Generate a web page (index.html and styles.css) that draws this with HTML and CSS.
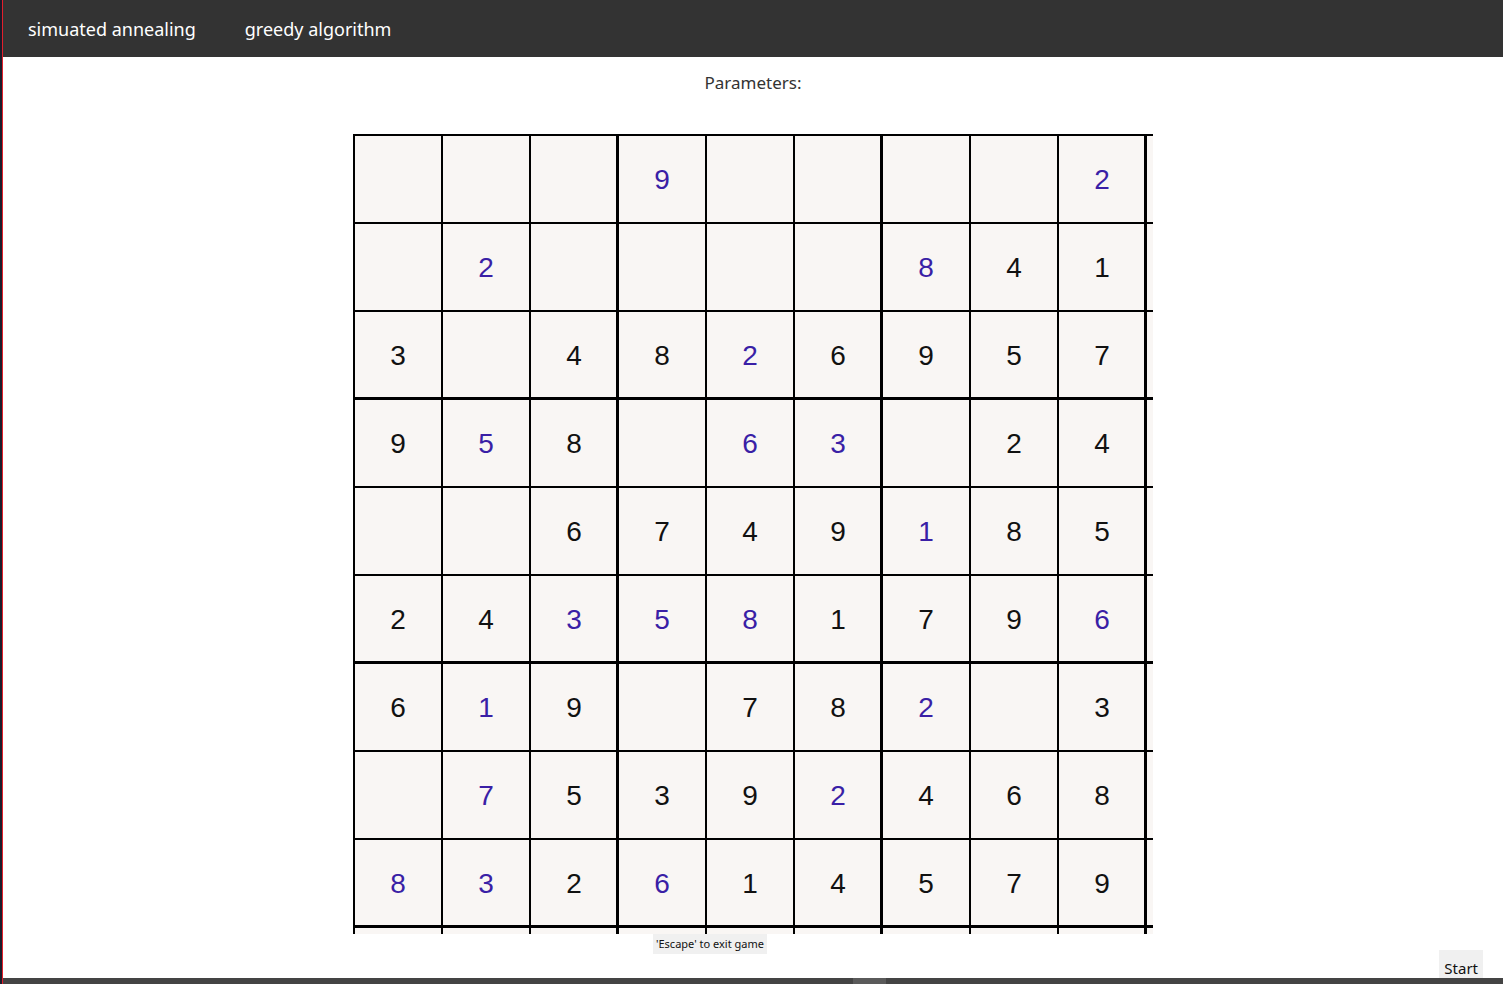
FILE: index.html
```html
<!DOCTYPE html>
<html>
<head>
<meta charset="utf-8">
<title>Sudoku</title>
<link rel="stylesheet" href="styles.css">
</head>
<body>
<div class="edge"></div>
<div class="app">
  <nav class="topbar">
    <span class="nav-item">simuated annealing</span>
    <span class="nav-item">greedy algorithm</span>
  </nav>
  <main class="content">
    <div class="params">Parameters:</div>
    <div class="board">
      <div class="row">
        <div class="c"></div><div class="c"></div><div class="c"></div><div class="c tl b">9</div><div class="c"></div><div class="c"></div><div class="c tl"></div><div class="c"></div><div class="c b">2</div><div class="c tl"></div>
      </div>
      <div class="row">
        <div class="c"></div><div class="c b">2</div><div class="c"></div><div class="c tl"></div><div class="c"></div><div class="c"></div><div class="c tl b">8</div><div class="c">4</div><div class="c">1</div><div class="c tl"></div>
      </div>
      <div class="row">
        <div class="c">3</div><div class="c"></div><div class="c">4</div><div class="c tl">8</div><div class="c b">2</div><div class="c">6</div><div class="c tl">9</div><div class="c">5</div><div class="c">7</div><div class="c tl"></div>
      </div>
      <div class="row tt">
        <div class="c">9</div><div class="c b">5</div><div class="c">8</div><div class="c tl"></div><div class="c b">6</div><div class="c b">3</div><div class="c tl"></div><div class="c">2</div><div class="c">4</div><div class="c tl"></div>
      </div>
      <div class="row">
        <div class="c"></div><div class="c"></div><div class="c">6</div><div class="c tl">7</div><div class="c">4</div><div class="c">9</div><div class="c tl b">1</div><div class="c">8</div><div class="c">5</div><div class="c tl"></div>
      </div>
      <div class="row">
        <div class="c">2</div><div class="c">4</div><div class="c b">3</div><div class="c tl b">5</div><div class="c b">8</div><div class="c">1</div><div class="c tl">7</div><div class="c">9</div><div class="c b">6</div><div class="c tl"></div>
      </div>
      <div class="row tt">
        <div class="c">6</div><div class="c b">1</div><div class="c">9</div><div class="c tl"></div><div class="c">7</div><div class="c">8</div><div class="c tl b">2</div><div class="c"></div><div class="c">3</div><div class="c tl"></div>
      </div>
      <div class="row">
        <div class="c"></div><div class="c b">7</div><div class="c">5</div><div class="c tl">3</div><div class="c">9</div><div class="c b">2</div><div class="c tl">4</div><div class="c">6</div><div class="c">8</div><div class="c tl"></div>
      </div>
      <div class="row">
        <div class="c b">8</div><div class="c b">3</div><div class="c">2</div><div class="c tl b">6</div><div class="c">1</div><div class="c">4</div><div class="c tl">5</div><div class="c">7</div><div class="c">9</div><div class="c tl"></div>
      </div>
      <div class="row tt">
        <div class="c"></div><div class="c"></div><div class="c"></div><div class="c tl"></div><div class="c"></div><div class="c"></div><div class="c tl"></div><div class="c"></div><div class="c"></div><div class="c tl"></div>
      </div>
    </div>
    <div class="footer">
      <span class="hint">'Escape' to exit game</span>
      <button class="start">Start</button>
    </div>
  </main>
  <div class="scrollbar"><div class="thumb"></div></div>
</div>
</body>
</html>
```

FILE: styles.css
```css
* { box-sizing: border-box; }

html, body {
  margin: 0;
  padding: 0;
}

body {
  display: flex;
  width: 1503px;
  height: 984px;
  overflow: hidden;
  background: #fff;
  font-family: "Noto Sans", "Open Sans", sans-serif;
}

.edge {
  flex: 0 0 3px;
  background: #1b1b2a;
  border-right: 1px solid #e3202b;
}

.app {
  flex: 1;
  min-width: 0;
  display: flex;
  flex-direction: column;
}

.topbar {
  flex: 0 0 57px;
  background: #333333;
  display: flex;
  align-items: center;
  padding-left: 25px;
  gap: 49px;
  color: #ffffff;
  font-size: 18px;
}

.content {
  flex: 1;
  min-height: 0;
  overflow: hidden;
}

.params {
  margin-top: 16px;
  text-align: center;
  font-size: 17px;
  line-height: 20px;
  color: #333;
}

.board {
  margin: 41px 0 0 350px;
  width: 800px;
  height: 800px;
  overflow: hidden;
  background: #f9f6f4;
}

.row {
  display: flex;
  height: 88px;
  border-top: 2px solid #000;
}

.row.tt {
  border-top-width: 3px;
  margin-top: -1px;
  height: 89px;
}

.c {
  flex: 0 0 88px;
  height: 100%;
  border-left: 2px solid #000;
  display: flex;
  align-items: center;
  justify-content: center;
  padding-top: 2px;
  font-family: "Liberation Sans", Arial, sans-serif;
  font-size: 28px;
  color: #111;
}

.c.tl {
  flex-basis: 89px;
  margin-left: -1px;
  border-left-width: 3px;
}

.c.b {
  color: #3a1fa6;
}

.footer {
  display: flex;
  align-items: flex-start;
}

.hint {
  margin-left: 650px;
  background: #f0f0f0;
  font-size: 11px;
  line-height: 20px;
  padding: 0 3px;
  color: #111;
}

.start {
  margin-left: auto;
  margin-right: 20px;
  margin-top: 16px;
  border: none;
  background: #f0f0f0;
  font-family: "Noto Sans", "Open Sans", sans-serif;
  font-size: 15px;
  padding: 8px 5px;
  color: #111;
}

.scrollbar {
  flex: 0 0 6px;
  background: #444;
  display: flex;
}

.thumb {
  margin-left: 850px;
  width: 33px;
  background: #5a5a5a;
}
```
